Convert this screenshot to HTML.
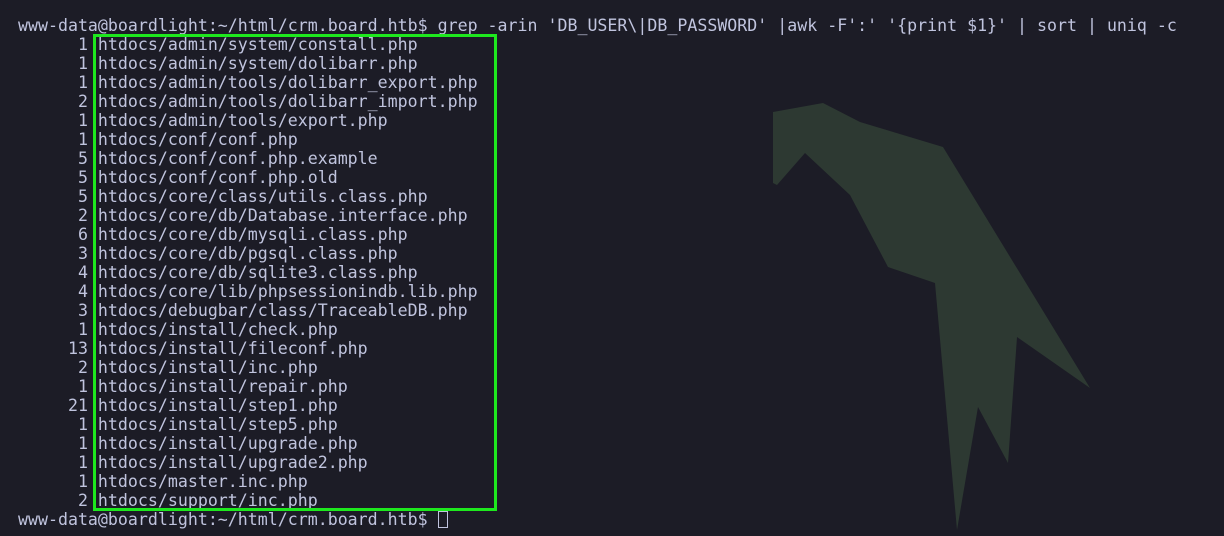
<!DOCTYPE html>
<html><head><meta charset="utf-8"><style>
html,body{margin:0;padding:0;background:#1c1c26;width:1224px;height:536px;overflow:hidden}
svg{position:absolute;left:0;top:0}
pre{position:absolute;left:18px;top:16px;margin:0;font-family:"DejaVu Sans Mono","Liberation Mono",monospace;font-size:16.6px;line-height:19px;color:#c0c4de;white-space:pre}
.box{position:absolute;left:93px;top:34px;width:398px;height:471px;border:3px solid #1ee81e}
.cur{display:inline-block;width:10px;height:17px;border:1px solid #c0c4de;box-sizing:border-box;vertical-align:-3px}
</style></head><body>
<svg width="1224" height="536"><polygon fill="#2d3932" points="773,112 823,103 860,122 943,147 1090,388 1017,337 1008,463 978,407 957,530 935,283 888,267 850,195 805,153 777,185 773,183"/></svg>
<pre>www-data@boardlight:~/html/crm.board.htb$ grep -arin 'DB_USER\|DB_PASSWORD' |awk -F':' '{print $1}' | sort | uniq -c
      1 htdocs/admin/system/constall.php
      1 htdocs/admin/system/dolibarr.php
      1 htdocs/admin/tools/dolibarr_export.php
      2 htdocs/admin/tools/dolibarr_import.php
      1 htdocs/admin/tools/export.php
      1 htdocs/conf/conf.php
      5 htdocs/conf/conf.php.example
      5 htdocs/conf/conf.php.old
      5 htdocs/core/class/utils.class.php
      2 htdocs/core/db/Database.interface.php
      6 htdocs/core/db/mysqli.class.php
      3 htdocs/core/db/pgsql.class.php
      4 htdocs/core/db/sqlite3.class.php
      4 htdocs/core/lib/phpsessionindb.lib.php
      3 htdocs/debugbar/class/TraceableDB.php
      1 htdocs/install/check.php
     13 htdocs/install/fileconf.php
      2 htdocs/install/inc.php
      1 htdocs/install/repair.php
     21 htdocs/install/step1.php
      1 htdocs/install/step5.php
      1 htdocs/install/upgrade.php
      1 htdocs/install/upgrade2.php
      1 htdocs/master.inc.php
      2 htdocs/support/inc.php
www-data@boardlight:~/html/crm.board.htb$ <span class="cur"></span></pre>
<div class="box"></div>
</body></html>
